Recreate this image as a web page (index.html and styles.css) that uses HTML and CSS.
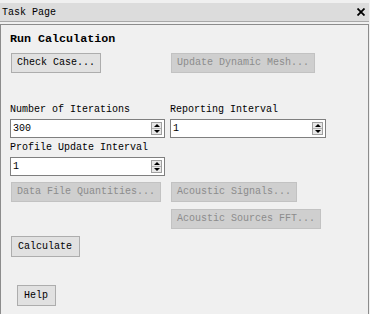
FILE: index.html
```html
<!DOCTYPE html>
<html lang="en">
<head>
    <meta charset="UTF-8">
    <meta name="viewport" content="width=device-width, initial-scale=1.0">
    <title>Task Page</title>
    <link rel="stylesheet" href="styles.css">
</head>
<body>
    <div class="window">
        <div class="titlebar">
            <span class="title">Task Page</span>
            <svg class="close" width="8" height="8" viewBox="0 0 8 8">
                <path d="M0.5 0.5 L7.5 7.5 M7.5 0.5 L0.5 7.5" stroke="#000" stroke-width="1.8"/>
            </svg>
        </div>

        <div class="panel">
            <h1>Run Calculation</h1>

            <div class="grid row-top">
                <div><button class="btn">Check Case...</button></div>
                <div><button class="btn" disabled>Update Dynamic Mesh...</button></div>
            </div>

            <div class="grid row-fields">
                <div>
                    <label for="iterations">Number of Iterations</label>
                    <div class="spin">
                        <input type="text" id="iterations" value="300">
                        <span class="arrows"><span class="up"></span><span class="down"></span></span>
                    </div>
                </div>
                <div>
                    <label for="reporting">Reporting Interval</label>
                    <div class="spin wide">
                        <input type="text" id="reporting" value="1">
                        <span class="arrows"><span class="up"></span><span class="down"></span></span>
                    </div>
                </div>
            </div>

            <div class="field">
                <label for="profile">Profile Update Interval</label>
                <div class="spin">
                    <input type="text" id="profile" value="1">
                    <span class="arrows"><span class="up"></span><span class="down"></span></span>
                </div>
            </div>

            <div class="grid row-data">
                <div><button class="btn" disabled>Data File Quantities...</button></div>
                <div class="stack">
                    <button class="btn" disabled>Acoustic Signals...</button>
                    <button class="btn" disabled>Acoustic Sources FFT...</button>
                </div>
            </div>

            <button class="btn calc">Calculate</button>

            <button class="btn help">Help</button>
        </div>
    </div>
</body>
</html>
```

FILE: styles.css
```css
body {
    margin: 0;
    background-color: #f0f0f0;
    font-family: "Liberation Mono", monospace;
    font-size: 10px;
    color: #000;
    overflow: hidden;
}
.window {
    padding-top: 3px;
    height: 311px;
}
.titlebar {
    height: 18px;
    background-color: #dcdcdc;
    border-bottom: 1px solid #a8a8a8;
    margin-right: 1px;
    display: flex;
    align-items: center;
    justify-content: space-between;
    padding: 0 4px 0 2px;
}
.title {
    font-size: 10px;
}
.close {
    display: block;
}
.panel {
    margin-top: 2px;
    margin-right: 1px;
    border: 1px solid #8c8c8c;
    border-bottom: none;
    height: 282px;
    padding: 7px 0 0 9px;
}
h1 {
    margin: 0;
    font-size: 11.7px;
    line-height: 14px;
    font-weight: bold;
}
.grid {
    display: grid;
    grid-template-columns: 160px auto;
}
.row-top {
    margin-top: 7px;
}
.btn {
    display: inline-block;
    font-family: "Liberation Mono", monospace;
    font-size: 10px;
    height: 20px;
    line-height: 18px;
    padding: 0 5px;
    margin: 0 0 0 1px;
    background-color: #e1e1e1;
    border: 1px solid #adadad;
    color: #000;
    text-align: left;
}
.btn:disabled {
    background-color: #cfcfcf;
    border-color: #c2c2c2;
    color: #8c8c8c;
}
label {
    display: block;
    line-height: 12px;
    margin-bottom: 3px;
}
.row-fields {
    margin-top: 31px;
}
.field {
    margin-top: 4px;
}
.spin {
    position: relative;
    width: 155px;
    height: 19px;
    box-sizing: border-box;
    border: 1px solid #7f7f7f;
    background-color: #fff;
}
.spin.wide {
    width: 156px;
}
.spin input {
    border: none;
    outline: none;
    padding: 0 0 0 2px;
    margin: 0;
    width: 130px;
    height: 17px;
    font-family: "Liberation Mono", monospace;
    font-size: 10px;
    background: transparent;
}
.arrows {
    position: absolute;
    right: 2px;
    top: 2px;
    width: 11px;
    height: 13px;
    box-sizing: border-box;
    border: 1px solid #a0a0a0;
    background-color: #e8e8e8;
    display: flex;
    flex-direction: column;
}
.arrows span {
    flex: 1;
    display: flex;
    align-items: center;
    justify-content: center;
}
.arrows .up {
    border-bottom: 1px solid #b4b4b4;
}
.arrows .up::before {
    content: "";
    border-left: 3px solid transparent;
    border-right: 3px solid transparent;
    border-bottom: 3px solid #000;
}
.arrows .down::before {
    content: "";
    border-left: 3px solid transparent;
    border-right: 3px solid transparent;
    border-top: 3px solid #000;
}
.row-data {
    margin-top: 6px;
}
.stack {
    display: flex;
    flex-direction: column;
    align-items: flex-start;
    gap: 7px;
}
.calc {
    display: block;
    margin-top: 7px;
    width: 69px;
    height: 21px;
    padding-left: 6px;
}
.help {
    display: block;
    margin: 28px 0 0 7px;
    width: 39px;
    height: 21px;
    padding-left: 6px;
}
```
